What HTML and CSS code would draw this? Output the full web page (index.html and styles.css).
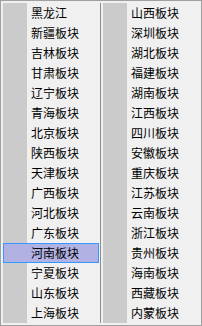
FILE: index.html
```html
<!DOCTYPE html>
<html lang="zh-CN">
<head>
    <meta charset="UTF-8">
    <title>板块列表</title>
    <link rel="stylesheet" href="styles.css">
</head>
<body>

<div class="box">
    <!-- 左列 -->
    <div class="panel panel-left">
        <ul class="list">
            <li>黑龙江</li>
            <li>新疆板块</li>
            <li>吉林板块</li>
            <li>甘肃板块</li>
            <li>辽宁板块</li>
            <li>青海板块</li>
            <li>北京板块</li>
            <li>陕西板块</li>
            <li>天津板块</li>
            <li>广西板块</li>
            <li>河北板块</li>
            <li>广东板块</li>
            <li class="selected">河南板块</li>
            <li>宁夏板块</li>
            <li>山东板块</li>
            <li>上海板块</li>
        </ul>
    </div>

    <!-- 右列 -->
    <div class="panel panel-right">
        <ul class="list">
            <li>山西板块</li>
            <li>深圳板块</li>
            <li>湖北板块</li>
            <li>福建板块</li>
            <li>湖南板块</li>
            <li>江西板块</li>
            <li>四川板块</li>
            <li>安徽板块</li>
            <li>重庆板块</li>
            <li>江苏板块</li>
            <li>云南板块</li>
            <li>浙江板块</li>
            <li>贵州板块</li>
            <li>海南板块</li>
            <li>西藏板块</li>
            <li>内蒙板块</li>
        </ul>
    </div>
</div>

</body>
</html>
```

FILE: styles.css
```css
body {
    margin: 0;
    padding: 0;
    font-family: "Noto Sans CJK SC", "Liberation Sans", sans-serif;
    font-size: 12px;
    color: #000;
}

.box {
    width: 202px;
    height: 326px;
    box-sizing: border-box;
    border: 1px solid #a0a0a0;
    background-color: #f0f0f0;
    display: flex;
}

.panel {
    box-sizing: border-box;
    width: 100px;
    padding: 2px 0 2px 2px;
}

.panel-left .list {
    /* 两列之间的分隔线 */
    border-right: 1px solid #8c8c8c;
    padding-right: 1px;
}

.list {
    list-style: none;
    margin: 0;
    padding: 0;
    width: 96px;
    /* 左侧灰色竖条 */
    background: linear-gradient(to right, #cbcbcb 24px, transparent 24px);
}

.list li {
    height: 20px;
    line-height: 20px;
    padding-left: 28px;
    white-space: nowrap;
}

.list li.selected {
    background-color: #b1b1e3;
    box-shadow: inset 0 0 0 1px #3399ff;
}
```
